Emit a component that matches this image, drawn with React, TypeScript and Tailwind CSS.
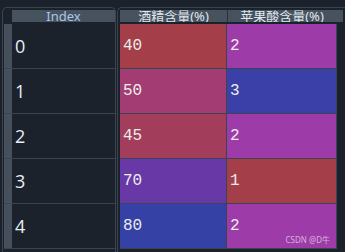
const rows = [
  { idx: 0, alcohol: 40, acid: 2, a: "bg-[#a43f49]", b: "bg-[#9d3ba8]" },
  { idx: 1, alcohol: 50, acid: 3, a: "bg-[#a33c72]", b: "bg-[#3a40a7]" },
  { idx: 2, alcohol: 45, acid: 2, a: "bg-[#a33d5c]", b: "bg-[#9d3ba8]" },
  { idx: 3, alcohol: 70, acid: 1, a: "bg-[#6738a6]", b: "bg-[#a43f49]" },
  { idx: 4, alcohol: 80, acid: 2, a: "bg-[#3641a6]", b: "bg-[#9d3ba8]" },
];

const cjk = { fontFamily: '"Noto Sans", "Noto Sans CJK SC", sans-serif' };
const mono = { fontFamily: '"Liberation Mono", monospace' };

export default function App() {
  return (
    <div className="w-[345px] h-[252px] overflow-hidden bg-[#1b222b] pt-[7px] flex" style={cjk}>
      {/* index panel */}
      <div className="ml-[2px] w-[114px] shrink-0 border-l border-t border-r border-[#3a444f] rounded-t-[5px] pt-[2px]">
        <div className="flex h-[12px]">
          <div className="w-[9px]" />
          <div className="w-[103px] bg-[#47525f] overflow-hidden flex justify-center">
            <span className="text-[13px] leading-[13px] text-[#a9c8e6]">Index</span>
          </div>
        </div>
        <div className="mt-[2px]">
          {rows.map((r) => (
            <div key={r.idx} className="flex h-[45px] ml-px border-b border-[#3b4552]">
              <div className="w-[8px] bg-[#45505c]" />
              <div className="flex-1 flex items-center pl-[3px] text-[18px] text-[#e6eef6]" style={{ fontFamily: '"Open Sans", sans-serif' }}>
                {r.idx}
              </div>
            </div>
          ))}
        </div>
      </div>

      {/* data panel */}
      <div className="ml-[1px] flex-1 border-l border-t border-[#3a444f] rounded-tl-[5px] pt-[2px] pl-[2px]">
        <div className="flex h-[12px] w-[223px] bg-[#47525f] overflow-hidden">
          <div className="w-[108px] flex justify-center border-r border-[#2a323c]">
            <span className="text-[13px] leading-[13px] text-[#dfe7ee]">酒精含量(%)</span>
          </div>
          <div className="w-[108px] flex justify-center">
            <span className="text-[13px] leading-[13px] text-[#dfe7ee]">苹果酸含量(%)</span>
          </div>
        </div>
        <div className="mt-[2px] w-[217px] border-r border-[#3b4552] relative">
          {rows.map((r) => (
            <div key={r.idx} className="flex h-[45px] border-b border-[#3b4552]">
              <div className={`w-[107px] ${r.a} border-r border-[#3b4552] flex items-center pl-[3px] text-[16px] text-[#ececec]`} style={mono}>
                {r.alcohol}
              </div>
              <div className={`flex-1 ${r.b} flex items-center pl-[3px] text-[16px] text-[#ececec]`} style={mono}>
                {r.acid}
              </div>
            </div>
          ))}
          <span className="absolute right-[6px] bottom-[5px] text-[8px] leading-none text-white/60">CSDN @D牛</span>
        </div>
      </div>
    </div>
  );
}
